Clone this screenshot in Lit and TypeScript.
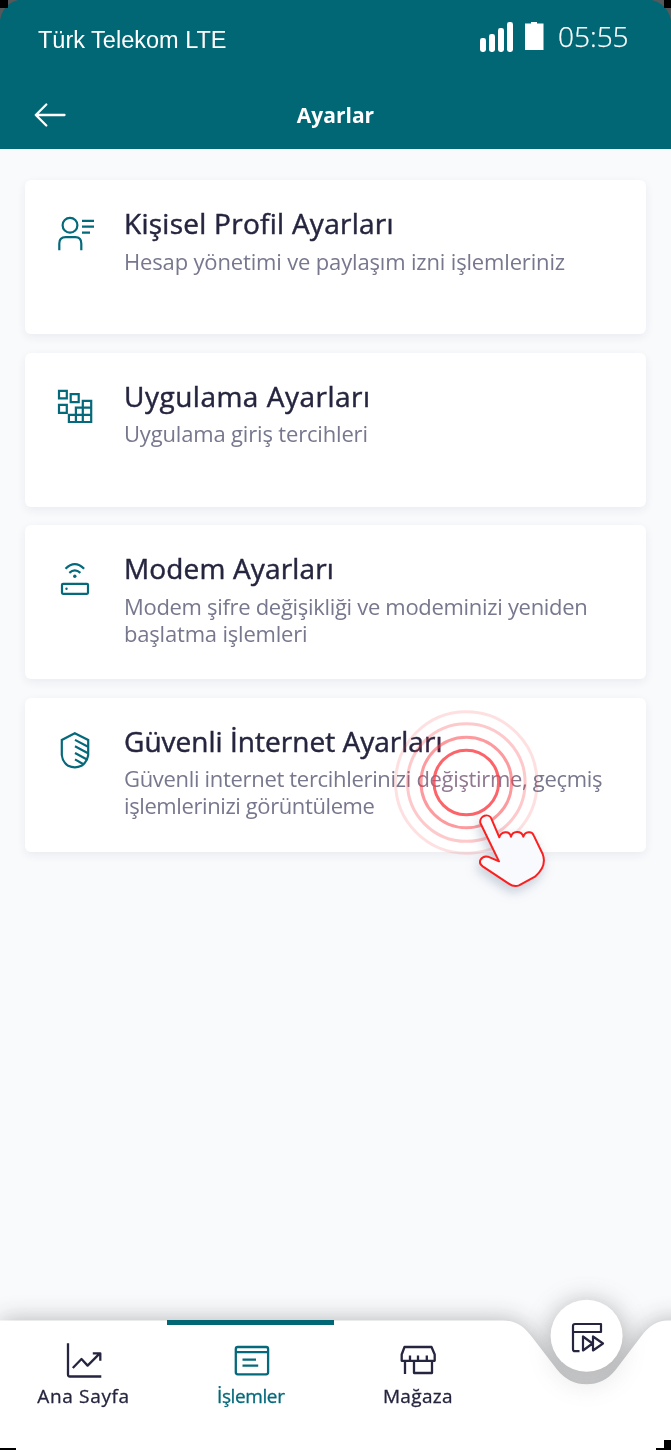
import { LitElement, html, css, TemplateResult } from "lit";
import { customElement } from "lit/decorators.js";

interface Line { text: string; track: number }
interface Card { icon: TemplateResult; title: Line; lines: Line[] }

const profileIcon = html`<svg class="icon" viewBox="0 0 50 50">
  <circle cx="20" cy="20.3" r="7.4"/><path d="M9.3 45.2V38.6Q9.3 32.2 15.7 32.2H25.3Q31.3 32.2 31.3 38.6V45.2"/>
  <path d="M32 15.9H44M32 21.6H44M32 27.6H40"/></svg>`;

const gridIcon = html`<svg class="icon" viewBox="0 0 50 50">
  <path d="M9 12.8H16.8V20.4H9ZM20.7 16.2H28.7V24.1H20.7ZM9 26.9H16.8V34.9H9Z"/>
  <path d="M18.9 36.8H41.2V44H18.9ZM25.9 29.7H41.2V44H25.9ZM32.8 22.8H41.2V44H32.8Z"/></svg>`;

const modemIcon = html`<svg class="icon" viewBox="0 0 50 50">
  <path d="M15.5 18.8Q24.8 9.4 34.1 18.8M19.3 22.8Q24.8 18 30.4 22.8"/>
  <circle class="solid" cx="24.8" cy="26.3" r="1.7"/><rect x="12" y="33.8" width="26" height="10" rx="1"/>
  <circle class="solid" cx="16.5" cy="38.7" r="1.2"/></svg>`;

const shieldIcon = html`<svg class="icon" viewBox="0 0 50 50">
  <path d="M24.8 10.3L38.2 17V32Q37.2 39 31.5 42.8Q24.8 46 18.2 42.8Q12.5 39 11.8 32V17Z"/>
  <path d="M25 16.9L38 23.7M25 23.2L38 30.2M25 30L37 36.5M25 36.4L33 41"/></svg>`;

const CARDS: Card[] = [
  { icon: profileIcon, title: { text: "Kişisel Profil Ayarları", track: 0.26 },
    lines: [{ text: "Hesap yönetimi ve paylaşım izni işlemleriniz", track: -0.16 }] },
  { icon: gridIcon, title: { text: "Uygulama Ayarları", track: 0.5 },
    lines: [{ text: "Uygulama giriş tercihleri", track: -0.17 }] },
  { icon: modemIcon, title: { text: "Modem Ayarları", track: 0.15 },
    lines: [{ text: "Modem şifre değişikliği ve modeminizi yeniden", track: -0.31 }, { text: "başlatma işlemleri", track: -0.19 }] },
  { icon: shieldIcon, title: { text: "Güvenli İnternet Ayarları", track: 0.02 },
    lines: [{ text: "Güvenli internet tercihlerinizi değiştirme, geçmiş", track: -0.32 }, { text: "işlemlerinizi görüntüleme", track: -0.4 }] },
];

@customElement("settings-card")
export class SettingsCard extends LitElement {
  static properties = { card: { attribute: false } };
  declare card: Card;
  static styles = css`
    :host { display: flex; box-sizing: border-box; height: 154px; padding: 25px 20px 0 25px; background: #fff; border-radius: 6px; box-shadow: 0 3px 10px rgba(40, 45, 70, .07); }
    .icon { width: 50px; height: 50px; flex: none; fill: none; stroke: #04697a; stroke-width: 2.2; }
    .solid { fill: #04697a; stroke: none; }
    .text { margin-left: 24px; white-space: nowrap; }
    .title { margin: 0; font: 500 28px/36px "Open Sans", sans-serif; color: #25253f; -webkit-text-stroke: .45px #25253f; }
    .line { display: block; font: 400 22px/27px "Open Sans", sans-serif; color: #77778e; }
    .desc { margin: 6.5px 0 0; }
  `;
  render() {
    const c = this.card;
    return html`${c.icon}<div class="text">
      <h2 class="title" style="letter-spacing:${c.title.track}px">${c.title.text}</h2>
      <p class="desc">${c.lines.map(l => html`<span class="line" style="letter-spacing:${l.track}px">${l.text}</span>`)}</p>
    </div>`;
  }
}

@customElement("app-root")
export class AppRoot extends LitElement {
  static styles = css`
    :host { display: block; }
    .screen { position: relative; display: flex; flex-direction: column; width: 671px; height: 1450px; overflow: hidden; background: #f9fafc; font-family: "Open Sans", sans-serif; }
    .head { height: 149px; background: #026775; color: #fff; }
    .status { display: flex; align-items: center; height: 74px; padding: 0 42px 0 38px; }
    .carrier { flex: 1; margin-top: 5px; font: 23.5px/30px "Liberation Sans", sans-serif; }
    .meters { width: 66px; height: 32px; fill: #fff; }
    .clock { width: 71px; margin: -3px 0 0 12px; font: 300 28px/34px "Open Sans", sans-serif; -webkit-text-stroke: .25px #fff; }
    .bar { display: grid; grid-template-columns: 64px 1fr 64px; align-items: center; height: 75px; }
    .back { width: 34px; height: 26px; margin-left: 33px; margin-top: 6px; fill: none; stroke: #fff; stroke-width: 2.3; stroke-linecap: round; stroke-linejoin: round; }
    .heading { margin: 7px 0 0; text-align: center; font: 700 21px/28px "Open Sans", sans-serif; }
    .cards { display: flex; flex-direction: column; gap: 18.5px; padding: 31px 25px 0; }
    .tabs { position: relative; margin-top: auto; height: 130px; display: grid; grid-template-columns: repeat(4, 167.2px); }
    .surface { position: absolute; left: 0; bottom: 0; width: 671px; height: 200px; }
    .tab { position: relative; display: flex; flex-direction: column; align-items: center; color: #25253f; font: 500 19px/24px "Open Sans", sans-serif; letter-spacing: .65px; -webkit-text-stroke: .3px currentColor; border-top: 5px solid transparent; }
    .tab.active { color: #04697a; border-top-color: #026775; letter-spacing: -.4px; }
    .tab.shop { letter-spacing: .35px; }
    .glyph { width: 40px; height: 40px; margin: 15px 0 4px; fill: none; stroke: currentColor; stroke-width: 2.3; stroke-linejoin: round; }
    .pulse { position: absolute; left: 386px; top: 702px; width: 160px; height: 160px; fill: none; stroke: #fb3d45; stroke-width: 3; }
    .tint { position: absolute; left: 400px; top: 716px; width: 132px; height: 132px; border-radius: 50%; mix-blend-mode: screen; background: radial-gradient(closest-side, rgba(190, 0, 10, .26) 50%, rgba(190, 0, 10, 0)); }
    .hand { position: absolute; left: 460px; top: 800px; width: 110px; height: 120px; overflow: visible; fill: #f8fafd; stroke: #fb1f1f; stroke-width: 6; stroke-linejoin: round; filter: drop-shadow(-2px 5px 6px rgba(60, 90, 130, .28)); }
    .corners { position: absolute; left: 0; top: 0; width: 671px; height: 1450px; pointer-events: none; }
  `;

  render() {
    return html`<main class="screen">
      <header class="head">
        <div class="status">
          <span class="carrier">Türk Telekom LTE</span>
          <svg class="meters" viewBox="0 0 66 32">
            <rect x="0" y="17" width="6" height="14" rx="2.4"/><rect x="9" y="13" width="6" height="18" rx="2.4"/>
            <rect x="18" y="7" width="6" height="24" rx="2.4"/><rect x="27" y="1" width="6" height="30" rx="2.4"/>
            <path d="M45 2.6H51V1H57V2.6H63.5V29H45Z"/>
          </svg>
          <span class="clock">05:55</span>
        </div>
        <div class="bar">
          <svg class="back" viewBox="0 0 34 26"><path d="M31.5 13H2.8M13.3 2.5L2.8 13L13.3 23.5"/></svg>
          <h1 class="heading">Ayarlar</h1>
        </div>
      </header>
      <section class="cards">${CARDS.map(c => html`<settings-card .card=${c}></settings-card>`)}</section>
      <nav class="tabs">
        <svg class="surface" viewBox="0 1250 671 200">
          <defs>
            <filter id="lift" filterUnits="userSpaceOnUse" x="-60" y="1250" width="800" height="260"><feGaussianBlur stdDeviation="12"/></filter>
            <filter id="soft" x="-60%" y="-60%" width="220%" height="220%"><feGaussianBlur stdDeviation="13"/></filter>
          </defs>
          <path fill="#333" opacity=".36" filter="url(#lift)" d="M0 1320.5H503C517 1320.5 524 1327 532 1337L557 1369.5C565 1379.5 575 1384.3 586.5 1384.3C598 1384.3 608 1379.5 615.5 1370L641 1336.5C649 1326 657 1320.5 668 1320.5H700V1480H0Z"/>
          <circle cx="587" cy="1339" r="38" fill="#666" opacity=".42" filter="url(#soft)"/>
          <path fill="#fff" d="M0 1320.5H503C517 1320.5 524 1327 532 1337L557 1369.5C565 1379.5 575 1384.3 586.5 1384.3C598 1384.3 608 1379.5 615.5 1370L641 1336.5C649 1326 657 1320.5 668 1320.5H671V1450H0Z"/>
          <circle cx="587" cy="1349" r="36" fill="#777" opacity=".16" filter="url(#soft)"/>
          <circle cx="586.6" cy="1335.8" r="36" fill="#fff"/>
          <g fill="none" stroke="#25253f" stroke-width="2.2" stroke-linejoin="round">
            <path d="M579.5 1351.2H575Q573 1351.2 573 1349.2V1326Q573 1324 575 1324H601V1332H573"/>
            <path d="M583 1336.5V1350.5L592.5 1343.5ZM593 1336.5V1350.5L603 1343.5Z"/>
          </g>
        </svg>
        <a class="tab"><svg class="glyph" viewBox="0 0 40 40"><path d="M4 3.2V34.5Q4 36.5 6 36.5H37.3M8.8 28L17.5 19L23.6 25.6L35.8 13.4M28.8 13.3H36.3V20.7"/></svg>Ana Sayfa</a>
        <a class="tab active"><svg class="glyph" viewBox="0 0 40 40"><rect x="4.8" y="7" width="32.3" height="27.3" rx="2"/><path d="M4.8 12.2H37.1M11.5 19.6H25M11.5 25.6H27.2"/></svg>İşlemler</a>
        <a class="tab shop"><svg class="glyph" viewBox="0 0 40 40"><path d="M6.5 7H33.5L36.7 14.5V20.8H3.7V14.5ZM12 20.8V15.5M20 20.8V15.5M28.8 20.8V15.5M7 20.8V34M16 20.8V33H34V20.8"/></svg>Mağaza</a>
      </nav>
      <div class="tint"></div>
      <svg class="pulse" viewBox="0 0 160 160">
        <circle cx="80.3" cy="80.5" r="32.3" opacity=".8"/><circle cx="80.3" cy="80.5" r="45.3" opacity=".52"/>
        <circle cx="80.3" cy="80.5" r="58.8" opacity=".28"/><circle cx="80.3" cy="80.5" r="70.7" opacity=".16"/>
      </svg>
      <svg class="hand" viewBox="240 330 330 360">
        <path d="M357 514L301 399C297 378 327 366 335 388L358 442C363 424 388 420 393 440C397 422 424 420 430 440C435 424 456 422 461 436L488 492C497 516 492 537 465 560L417 586C405 591 398 589 386 581L308 529C291 517 304 496 324 500Z"/>
      </svg>
      <svg class="corners" viewBox="0 0 671 1450">
        <path fill="#55595b" d="M0 0H18Q3 4 0 20ZM671 0H652Q667 4 671 20Z"/>
        <path d="M0 0H8V8H0ZM664 0H671V8H664ZM0 1448H16V1450H0ZM656 1448H664V1440H671V1450H656Z"/>
      </svg>
    </main>`;
  }
}
